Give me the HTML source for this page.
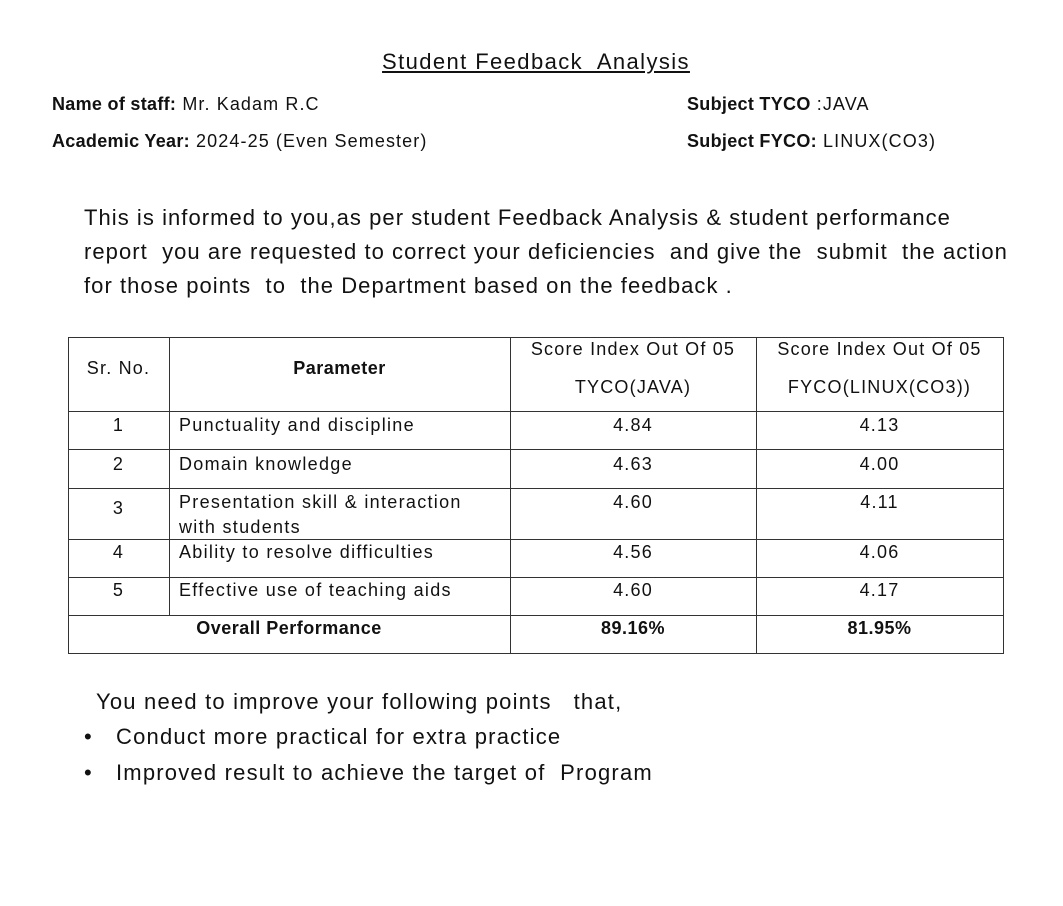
<!DOCTYPE html>
<html><head><meta charset="utf-8"><style>
body{margin:0;width:1063px;height:906px;background:#fff;position:relative;overflow:hidden;font-family:"Liberation Sans",sans-serif;color:#111}
.a{position:absolute;white-space:nowrap;line-height:24px}
.h{position:absolute;height:1px;background:#333}
.v{position:absolute;width:1px;background:#333}
.c{position:absolute;text-align:center;font-size:18px;line-height:24px;white-space:nowrap;letter-spacing:1.2px}
.l{position:absolute;font-size:18px;line-height:24px;white-space:nowrap;letter-spacing:1.3px}
.s{font-weight:bold;letter-spacing:0.3px}
</style></head><body>
<div class="a" style="left:0;width:1072px;text-align:center;top:49px;font-size:22px;line-height:26px;text-decoration:underline;letter-spacing:1.4px">Student Feedback&nbsp; Analysis</div>
<div class="a" style="left:52px;top:92px;font-size:18px;letter-spacing:1.1px"><span class="s">Name of staff:</span> Mr. Kadam R.C</div>
<div class="a" style="left:52px;top:129px;font-size:18px;letter-spacing:1.1px"><span class="s">Academic Year:</span> 2024-25 (Even Semester)</div>
<div class="a" style="left:687px;top:92px;font-size:18px;letter-spacing:1.1px"><span class="s">Subject TYCO</span> :JAVA</div>
<div class="a" style="left:687px;top:129px;font-size:18px;letter-spacing:1.1px"><span class="s">Subject FYCO:</span> LINUX(CO3)</div>
<div class="a" style="left:84px;top:201px;font-size:22px;line-height:34px;letter-spacing:1.05px">This is informed to you,as per student Feedback Analysis &amp; student performance<br>report&nbsp; you are requested to correct your deficiencies&nbsp; and give the&nbsp; submit&nbsp; the action<br>for those points&nbsp; to&nbsp; the Department based on the feedback .</div>

<div class="h" style="left:68px;width:936px;top:337px"></div>
<div class="h" style="left:68px;width:936px;top:411px"></div>
<div class="h" style="left:68px;width:936px;top:449px"></div>
<div class="h" style="left:68px;width:936px;top:488px"></div>
<div class="h" style="left:68px;width:936px;top:539px"></div>
<div class="h" style="left:68px;width:936px;top:577px"></div>
<div class="h" style="left:68px;width:936px;top:615px"></div>
<div class="h" style="left:68px;width:936px;top:653px"></div>
<div class="v" style="left:68px;top:337px;height:317px"></div>
<div class="v" style="left:169px;top:337px;height:279px"></div>
<div class="v" style="left:510px;top:337px;height:317px"></div>
<div class="v" style="left:756px;top:337px;height:317px"></div>
<div class="v" style="left:1003px;top:337px;height:317px"></div>

<div class="c" style="left:68px;width:101px;top:356px">Sr. No.</div>
<div class="c s" style="left:169px;width:341px;top:356px;letter-spacing:0.5px">Parameter</div>
<div class="c" style="left:510px;width:246px;top:337px">Score Index Out Of 05</div>
<div class="c" style="left:510px;width:246px;top:375px">TYCO(JAVA)</div>
<div class="c" style="left:756px;width:247px;top:337px">Score Index Out Of 05</div>
<div class="c" style="left:756px;width:247px;top:375px">FYCO(LINUX(CO3))</div>

<div class="c" style="left:68px;width:101px;top:413px">1</div>
<div class="l" style="left:179px;top:413px">Punctuality and discipline</div>
<div class="c" style="left:510px;width:246px;top:413px">4.84</div>
<div class="c" style="left:756px;width:247px;top:413px">4.13</div>

<div class="c" style="left:68px;width:101px;top:452px">2</div>
<div class="l" style="left:179px;top:452px">Domain knowledge</div>
<div class="c" style="left:510px;width:246px;top:452px">4.63</div>
<div class="c" style="left:756px;width:247px;top:452px">4.00</div>

<div class="c" style="left:68px;width:101px;top:496px">3</div>
<div class="l" style="left:179px;top:490px;line-height:25px">Presentation skill &amp; interaction<br>with students</div>
<div class="c" style="left:510px;width:246px;top:490px">4.60</div>
<div class="c" style="left:756px;width:247px;top:490px">4.11</div>

<div class="c" style="left:68px;width:101px;top:540px">4</div>
<div class="l" style="left:179px;top:540px">Ability to resolve difficulties</div>
<div class="c" style="left:510px;width:246px;top:540px">4.56</div>
<div class="c" style="left:756px;width:247px;top:540px">4.06</div>

<div class="c" style="left:68px;width:101px;top:578px">5</div>
<div class="l" style="left:179px;top:578px">Effective use of teaching aids</div>
<div class="c" style="left:510px;width:246px;top:578px">4.60</div>
<div class="c" style="left:756px;width:247px;top:578px">4.17</div>

<div class="c s" style="left:68px;width:442px;top:616px;letter-spacing:0.5px">Overall Performance</div>
<div class="c s" style="left:510px;width:246px;top:616px;letter-spacing:0.5px">89.16%</div>
<div class="c s" style="left:756px;width:247px;top:616px;letter-spacing:0.5px">81.95%</div>

<div class="a" style="left:96px;top:688px;font-size:22px;line-height:28px;letter-spacing:1.2px">You need to improve your following points&nbsp;&nbsp; that,</div>
<div class="a" style="left:84px;top:723px;font-size:22px;line-height:28px">•</div>
<div class="a" style="left:116px;top:723px;font-size:22px;line-height:28px;letter-spacing:1.2px">Conduct more practical for extra practice</div>
<div class="a" style="left:84px;top:759px;font-size:22px;line-height:28px">•</div>
<div class="a" style="left:116px;top:759px;font-size:22px;line-height:28px;letter-spacing:1.2px">Improved result to achieve the target of&nbsp; Program</div>
</body></html>
